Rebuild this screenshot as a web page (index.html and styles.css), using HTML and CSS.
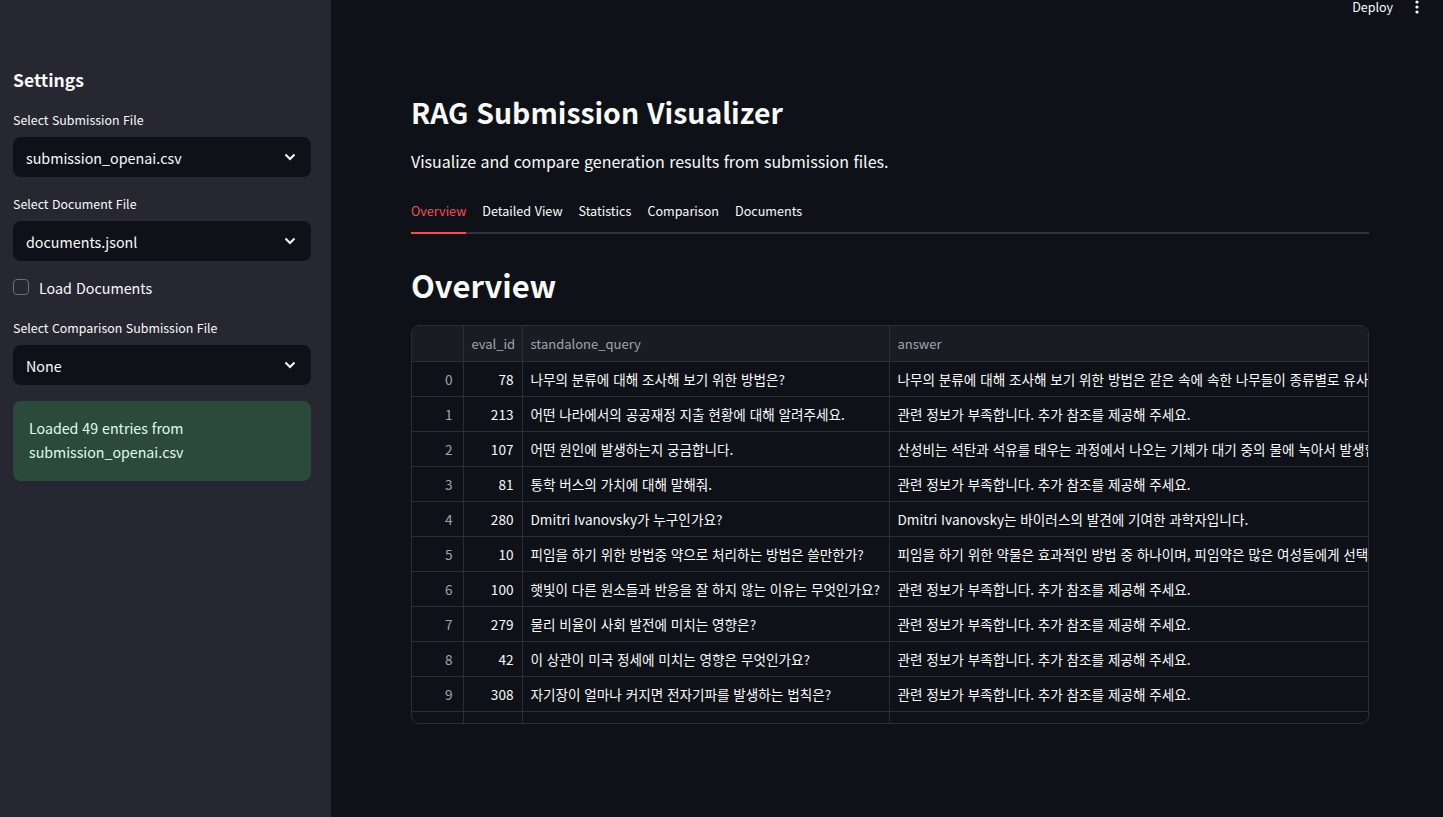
FILE: index.html
```html
<!DOCTYPE html>
<html lang="ko">
<head>
<meta charset="utf-8">
<title>RAG Submission Visualizer</title>
<link rel="stylesheet" href="styles.css">
</head>
<body>
<aside class="sidebar">
  <h2 class="sb-title">Settings</h2>
  <div class="field">
    <label class="field-label">Select Submission File</label>
    <div class="select"><span>submission_openai.csv</span><svg class="chev" viewBox="0 0 12 8" width="12" height="8"><path d="M1.5 1.5 L6 6 L10.5 1.5" fill="none" stroke="#fafafa" stroke-width="2"/></svg></div>
  </div>
  <div class="field">
    <label class="field-label">Select Document File</label>
    <div class="select"><span>documents.jsonl</span><svg class="chev" viewBox="0 0 12 8" width="12" height="8"><path d="M1.5 1.5 L6 6 L10.5 1.5" fill="none" stroke="#fafafa" stroke-width="2"/></svg></div>
  </div>
  <div class="check"><span class="box"></span><span>Load Documents</span></div>
  <div class="field">
    <label class="field-label">Select Comparison Submission File</label>
    <div class="select"><span>None</span><svg class="chev" viewBox="0 0 12 8" width="12" height="8"><path d="M1.5 1.5 L6 6 L10.5 1.5" fill="none" stroke="#fafafa" stroke-width="2"/></svg></div>
  </div>
  <div class="success">Loaded 49 entries from<br>submission_openai.csv</div>
</aside>
<main class="main">
  <div class="topbar">
    <span class="deploy">Deploy</span>
    <svg class="kebab" viewBox="0 0 4 14" width="4" height="14"><circle cx="2" cy="2" r="1.6" fill="#fafafa"/><circle cx="2" cy="7" r="1.6" fill="#fafafa"/><circle cx="2" cy="12" r="1.6" fill="#fafafa"/></svg>
  </div>
  <div class="content">
    <h1 class="title">RAG Submission Visualizer</h1>
    <p class="subtitle">Visualize and compare generation results from submission files.</p>
    <nav class="tabs">
      <span class="tab active">Overview</span>
      <span class="tab">Detailed View</span>
      <span class="tab">Statistics</span>
      <span class="tab">Comparison</span>
      <span class="tab">Documents</span>
    </nav>
    <h2 class="section">Overview</h2>
    <div class="table-wrap">
      <table class="grid">
        <colgroup><col class="c-idx"><col class="c-id"><col class="c-q"><col class="c-a"></colgroup>
        <thead>
          <tr><th></th><th class="num">eval_id</th><th>standalone_query</th><th>answer</th></tr>
        </thead>
        <tbody>
          <tr><td class="idx">0</td><td class="num">78</td><td>나무의 분류에 대해 조사해 보기 위한 방법은?</td><td>나무의 분류에 대해 조사해 보기 위한 방법은 같은 속에 속한 나무들이 종류별로 유사한 특징을 가지고 있는지 확인하는 것입니다.</td></tr>
          <tr><td class="idx">1</td><td class="num">213</td><td>어떤 나라에서의 공공재정 지출 현황에 대해 알려주세요.</td><td>관련 정보가 부족합니다. 추가 참조를 제공해 주세요.</td></tr>
          <tr><td class="idx">2</td><td class="num">107</td><td>어떤 원인에 발생하는지 궁금합니다.</td><td>산성비는 석탄과 석유를 태우는 과정에서 나오는 기체가 대기 중의 물에 녹아서 발생합니다.</td></tr>
          <tr><td class="idx">3</td><td class="num">81</td><td>통학 버스의 가치에 대해 말해줘.</td><td>관련 정보가 부족합니다. 추가 참조를 제공해 주세요.</td></tr>
          <tr><td class="idx">4</td><td class="num">280</td><td>Dmitri Ivanovsky가 누구인가요?</td><td>Dmitri Ivanovsky는 바이러스의 발견에 기여한 과학자입니다.</td></tr>
          <tr><td class="idx">5</td><td class="num">10</td><td>피임을 하기 위한 방법중 약으로 처리하는 방법은 쓸만한가?</td><td>피임을 하기 위한 약물은 효과적인 방법 중 하나이며, 피임약은 많은 여성들에게 선택되는 방법입니다.</td></tr>
          <tr><td class="idx">6</td><td class="num">100</td><td>햇빛이 다른 원소들과 반응을 잘 하지 않는 이유는 무엇인가요?</td><td>관련 정보가 부족합니다. 추가 참조를 제공해 주세요.</td></tr>
          <tr><td class="idx">7</td><td class="num">279</td><td>물리 비율이 사회 발전에 미치는 영향은?</td><td>관련 정보가 부족합니다. 추가 참조를 제공해 주세요.</td></tr>
          <tr><td class="idx">8</td><td class="num">42</td><td>이 상관이 미국 정세에 미치는 영향은 무엇인가요?</td><td>관련 정보가 부족합니다. 추가 참조를 제공해 주세요.</td></tr>
          <tr><td class="idx">9</td><td class="num">308</td><td>자기장이 얼마나 커지면 전자기파를 발생하는 법칙은?</td><td>관련 정보가 부족합니다. 추가 참조를 제공해 주세요.</td></tr>
          <tr><td class="idx">10</td><td class="num">95</td><td>다른 집에 살고 돌아가는 새들을 위해는 어떻게 하는 것인가요?</td><td>사람과 같이 다른 집에 살고 돌아가는 새들을 위해는 어떻게 합니다.</td></tr>
        </tbody>
      </table>
    </div>
  </div>
</main>
</body>
</html>
```

FILE: styles.css
```css
* { box-sizing: border-box; }
html, body { margin: 0; padding: 0; height: 100%; }
body {
  display: flex;
  background: #0e1117;
  color: #fafafa;
  font-family: "Noto Sans CJK KR", "Noto Sans", sans-serif;
  overflow: hidden;
}

.sidebar {
  width: 331px;
  flex: 0 0 331px;
  height: 817px;
  background: #262730;
  padding: 66px 20px 0 13px;
  display: flex;
  flex-direction: column;
}
.sb-title {
  margin: 0 0 17px;
  font-size: 17.5px;
  line-height: 28px;
  font-weight: 700;
}
.field { display: flex; flex-direction: column; margin-bottom: 18px; }
.field-label {
  font-size: 12.4px;
  line-height: 18px;
  margin-bottom: 8px;
}
.select {
  height: 40px;
  background: #0e1117;
  border-radius: 8px;
  display: flex;
  align-items: center;
  justify-content: space-between;
  padding: 0 15px 0 13px;
  font-size: 14.3px;
}
.chev { display: block; }
.check {
  display: flex;
  align-items: center;
  gap: 10px;
  font-size: 14.3px;
  height: 20px;
  margin: -2px 0 22px;
}
.box {
  width: 16px; height: 16px;
  border: 1px solid #6b6d77;
  border-radius: 4px;
  background: #262730;
}
.success {
  margin-top: -2px;
  background: #2c4a3c;
  color: #dffde9;
  border-radius: 8px;
  padding: 15px 16px;
  height: 80px;
  font-size: 14.2px;
  line-height: 24px;
}

.main { flex: 1; position: relative; height: 817px; }
.topbar {
  position: absolute;
  top: 0; right: 0;
  display: flex;
  align-items: center;
  gap: 22px;
  padding-right: 24px;
  height: 13px;
}
.deploy { font-size: 12.5px; line-height: 13px; }
.kebab { display: block; }

.content {
  margin-left: 80px;
  width: 958px;
  padding-top: 92px;
}
.title {
  margin: 0;
  font-size: 28.4px;
  line-height: 40px;
  font-weight: 700;
}
.subtitle {
  margin: 16px 0 0;
  font-size: 16px;
  line-height: 26px;
}
.tabs {
  display: flex;
  gap: 16px;
  margin-top: 25px;
  border-bottom: 2px solid #31333b;
}
.tab {
  font-size: 12.6px;
  line-height: 20px;
  padding: 2px 0 11px;
  margin-bottom: -2px;
  border-bottom: 2px solid transparent;
}
.tab.active { color: #ff4b4b; border-bottom-color: #ff4b4b; }

.section {
  margin: 27px 0 0;
  font-size: 31px;
  line-height: 48px;
  font-weight: 700;
}
.table-wrap {
  margin-top: 16px;
  height: 399px;
  border: 1px solid #2c2e36;
  border-radius: 8px;
  overflow: hidden;
}
.grid {
  border-collapse: collapse;
  table-layout: fixed;
  width: 1200px;
  font-size: 13.6px;
}
.c-idx { width: 51px; }
.c-id { width: 59px; }
.c-q { width: 367px; }
.c-a { width: 723px; }
.grid th, .grid td {
  height: 35px;
  padding: 0 8px;
  white-space: nowrap;
  overflow: hidden;
  border-right: 1px solid #2c2e36;
  border-bottom: 1px solid #2c2e36;
  text-align: left;
}
.grid th {
  height: 35px;
  background: #1a1c24;
  color: #a3a4a8;
  font-weight: 400;
  font-size: 13px;
}
.grid td { color: #fafafa; }
.grid .num { text-align: right; }
.grid td.idx { text-align: right; color: #a3a4a8; padding-right: 10px; }
```
